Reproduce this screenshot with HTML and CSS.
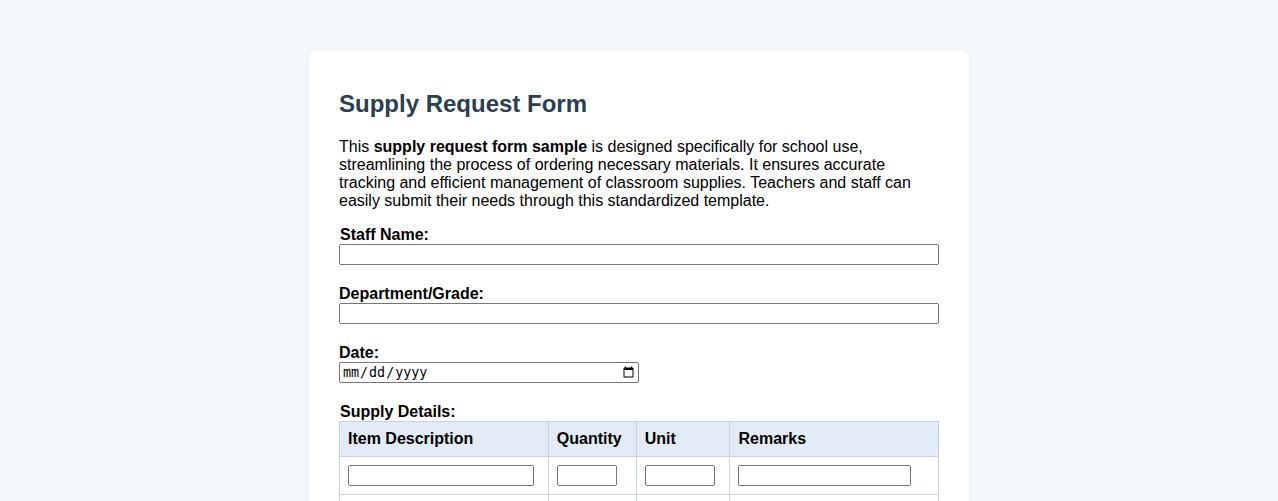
FILE: index.html
```html
<!DOCTYPE html>
<html>
<head>
    <title>Supply Request Form</title>
    <link rel="stylesheet" href="styles.css">
</head>
<body>
    <div class="container">
        <h2>Supply Request Form</h2>
        <p>This <strong>supply request form sample</strong> is designed specifically for school use, streamlining the process of ordering necessary materials. It ensures accurate tracking and efficient management of classroom supplies. Teachers and staff can easily submit their needs through this standardized template.</p>

        <div class="form-group">
            <label for="staff" class="nudge">Staff Name:</label>
            <input type="text" id="staff" class="full">
        </div>
        <div class="form-group">
            <label for="dept">Department/Grade:</label>
            <input type="text" id="dept" class="full">
        </div>
        <div class="form-group">
            <label for="date">Date:</label>
            <input type="date" id="date" class="half">
        </div>

        <!-- Supply table -->
        <div class="form-group">
            <label class="nudge">Supply Details:</label>
            <table class="supply-table">
                <colgroup>
                    <col class="col-item">
                    <col class="col-qty">
                    <col class="col-unit">
                    <col class="col-remarks">
                </colgroup>
                <tr>
                    <th>Item Description</th>
                    <th>Quantity</th>
                    <th>Unit</th>
                    <th>Remarks</th>
                </tr>
                <tr>
                    <td><input type="text" class="in-item"></td>
                    <td><input type="text" class="in-qty"></td>
                    <td><input type="text" class="in-unit"></td>
                    <td><input type="text" class="in-remarks"></td>
                </tr>
                <tr>
                    <td><input type="text" class="in-item"></td>
                    <td><input type="text" class="in-qty"></td>
                    <td><input type="text" class="in-unit"></td>
                    <td><input type="text" class="in-remarks"></td>
                </tr>
            </table>
        </div>
    </div>
</body>
</html>
```

FILE: styles.css
```css
body {
    margin: 0;
    background-color: #f5f8fb;
    font-family: "Liberation Sans", Arial, sans-serif;
    font-size: 16px;
    color: #000;
}
.container {
    width: 600px;
    margin: 50px auto;
    padding: 30px;
    background-color: #fff;
    border-radius: 8px;
    box-shadow: 0 0 10px rgba(0, 0, 0, 0.04);
}
h2 {
    margin: 10px 0 20px;
    font-size: 24px;
    color: #2c3e50;
}
p {
    margin: 0 0 16px;
}
.form-group {
    margin-bottom: 20px;
}
label {
    display: block;
    font-weight: bold;
}
label.nudge {
    padding-left: 1px;
}
input {
    display: block;
    box-sizing: border-box;
    height: 21px;
}
.full {
    width: 600px;
}
.half {
    width: 300px;
}
.supply-table {
    width: 600px;
    border-collapse: collapse;
}
.supply-table th, .supply-table td {
    border: 1px solid #c6d2e0;
    padding: 8px;
    text-align: left;
}
.supply-table th {
    background-color: #e2ebf6;
}
.col-item { width: 209px; }
.col-qty { width: 88px; }
.col-unit { width: 94px; }
.col-remarks { width: 209px; }
.in-item { width: 186px; }
.in-qty { width: 60px; }
.in-unit { width: 70px; }
.in-remarks { width: 173px; }
```
